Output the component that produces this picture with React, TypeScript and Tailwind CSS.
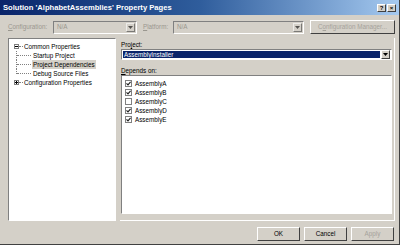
const font = { fontFamily: '"Liberation Sans", Arial, sans-serif' };

function ComboArrow() {
  return (
    <div className="w-[9px] h-[9px] bg-[#d4d0c8] border border-t-white border-l-white border-b-[#404040] border-r-[#404040] flex items-center justify-center">
      <svg width="5" height="3" viewBox="0 0 5 3">
        <path d="M0 0h5L2.5 3z" fill="#000" />
      </svg>
    </div>
  );
}

function DisabledCombo({ value, width }: { value: string; width: string }) {
  return (
    <div className={`${width} h-[13px] bg-[#d4d0c8] border border-t-[#808080] border-l-[#808080] border-b-white border-r-white flex items-center justify-between pl-[3px] pr-[1px]`}>
      <span className="text-[6.3px] text-[#9a978f]">{value}</span>
      <div className="opacity-60">
        <ComboArrow />
      </div>
    </div>
  );
}

function Btn({ label, disabled }: { label: string; disabled?: boolean }) {
  return (
    <div className="w-[43px] h-[14px] bg-[#d4d0c8] border border-t-white border-l-white border-b-[#404040] border-r-[#404040] flex items-center justify-center">
      <span className={`text-[6.3px] ${disabled ? "text-[#a5a29b]" : "text-black"}`}>{label}</span>
    </div>
  );
}

function Check({ checked }: { checked: boolean }) {
  return (
    <div className="w-[7px] h-[7px] bg-white border border-[#808080] flex items-center justify-center">
      {checked && (
        <svg width="5" height="5" viewBox="0 0 5 5">
          <path d="M0.5 2.3 L2 3.8 L4.6 0.8" stroke="#222" strokeWidth="1.2" fill="none" />
        </svg>
      )}
    </div>
  );
}

const deps: [string, boolean][] = [
  ["AssemblyA", true],
  ["AssemblyB", true],
  ["AssemblyC", false],
  ["AssemblyD", true],
  ["AssemblyE", true],
];

export default function App() {
  return (
    <div className="w-[400px] h-[245px] bg-[#d4d0c8] flex flex-col border-r border-b border-r-[#404040] border-b-[#404040] overflow-hidden" style={font}>
      {/* title bar */}
      <div className="h-[15px] shrink-0 bg-gradient-to-r from-[#0a246a] via-[#2f5d9c] to-[#a6caf0] flex items-center justify-between pl-[3px] pr-[3px]">
        <span className="text-white font-bold text-[7.6px]">Solution 'AlphabetAssemblies' Property Pages</span>
        <div className="flex gap-[1px]">
          <div className="w-[9px] h-[8px] bg-[#d4d0c8] border border-t-white border-l-white border-b-[#404040] border-r-[#404040] flex items-center justify-center text-[6px] font-bold leading-none">?</div>
          <div className="w-[9px] h-[8px] bg-[#d4d0c8] border border-t-white border-l-white border-b-[#404040] border-r-[#404040] flex items-center justify-center text-[6px] font-bold leading-none">×</div>
        </div>
      </div>

      {/* config row */}
      <div className="h-[14px] mt-[5px] flex items-center pl-[8px]">
        <span className="w-[45px] text-[6.3px] text-[#9a978f]"><u>C</u>onfiguration:</span>
        <DisabledCombo value="N/A" width="w-[84px]" />
        <span className="ml-[6px] w-[30px] text-[6.3px] text-[#9a978f]"><u>P</u>latform:</span>
        <DisabledCombo value="N/A" width="w-[131px]" />
        <div className="ml-[6px] w-[85px] h-[14px] border border-t-white border-l-white border-b-[#404040] border-r-[#404040] flex items-center justify-center">
          <span className="text-[6.3px] text-[#a5a29b]">C<u>o</u>nfiguration Manager...</span>
        </div>
      </div>

      {/* main */}
      <div className="flex mt-[4px] pl-[8px] h-[183px]">
        <div className="w-[108px] h-[183px] bg-white border border-t-[#808080] border-l-[#808080] border-b-white border-r-white">
          <div className="pt-[3px] text-[6.3px] text-black">
            <div className="flex items-center h-[9px]">
              <div className="ml-[5px] w-[5px] h-[5px] border border-[#808080] flex items-center justify-center bg-white">
                <div className="w-[3px] h-[1px] bg-black" />
              </div>
              <span className="w-[4px] border-t border-dotted border-[#808080]" />
              <span className="ml-[1px]">Common Properties</span>
            </div>
            {["Startup Project", "Project Dependencies", "Debug Source Files"].map((t, i) => (
              <div key={t} className="flex items-center h-[9px]">
                <div className={`ml-[7px] w-[1px] border-l border-dotted border-[#808080] ${i === 2 ? "h-[5px] self-start" : "self-stretch"}`} />
                <span className="w-[14px] border-t border-dotted border-[#808080]" />
                <span className={`ml-[1px] px-[1px] ${i === 1 ? "bg-[#d4d0c8]" : ""}`}>{t}</span>
              </div>
            ))}
            <div className="flex items-center h-[9px]">
              <div className="ml-[5px] w-[5px] h-[5px] border border-[#808080] flex items-center justify-center bg-white relative">
                <div className="w-[3px] h-[1px] bg-black" />
                <div className="absolute w-[1px] h-[3px] bg-black" />
              </div>
              <span className="w-[4px] border-t border-dotted border-[#808080]" />
              <span className="ml-[1px]">Configuration Properties</span>
            </div>
          </div>
        </div>

        <div className="ml-[4px] w-[275px] h-[183px] border-r border-b border-r-white border-b-white pl-[1px] pr-[2px]">
          <div className="text-[6.3px] text-black mt-[2px] h-[9px]">Pro<u>j</u>ect:</div>
          <div className="h-[11px] bg-white border border-t-[#808080] border-l-[#808080] border-b-white border-r-white flex items-center justify-between p-[1px]">
            <div className="flex-1 h-full bg-[#0a246a] flex items-center pl-[1px] mr-[1px]">
              <span className="text-white text-[6.3px]">AssemblyInstaller</span>
            </div>
            <ComboArrow />
          </div>
          <div className="text-[6.3px] text-black mt-[6px] h-[9px]"><u>D</u>epends on:</div>
          <div className="h-[139px] bg-white border border-t-[#808080] border-l-[#808080] border-b-white border-r-white pt-[3px] pl-[3px]">
            {deps.map(([name, c]) => (
              <div key={name} className="flex items-center h-[9px] gap-[3px]">
                <Check checked={c} />
                <span className="text-[6.3px] text-black">{name}</span>
              </div>
            ))}
          </div>
        </div>
      </div>

      {/* buttons */}
      <div className="flex justify-end gap-[4px] mt-[6px] pr-[5px]">
        <Btn label="OK" />
        <Btn label="Cancel" />
        <Btn label="Apply" disabled />
      </div>
    </div>
  );
}
